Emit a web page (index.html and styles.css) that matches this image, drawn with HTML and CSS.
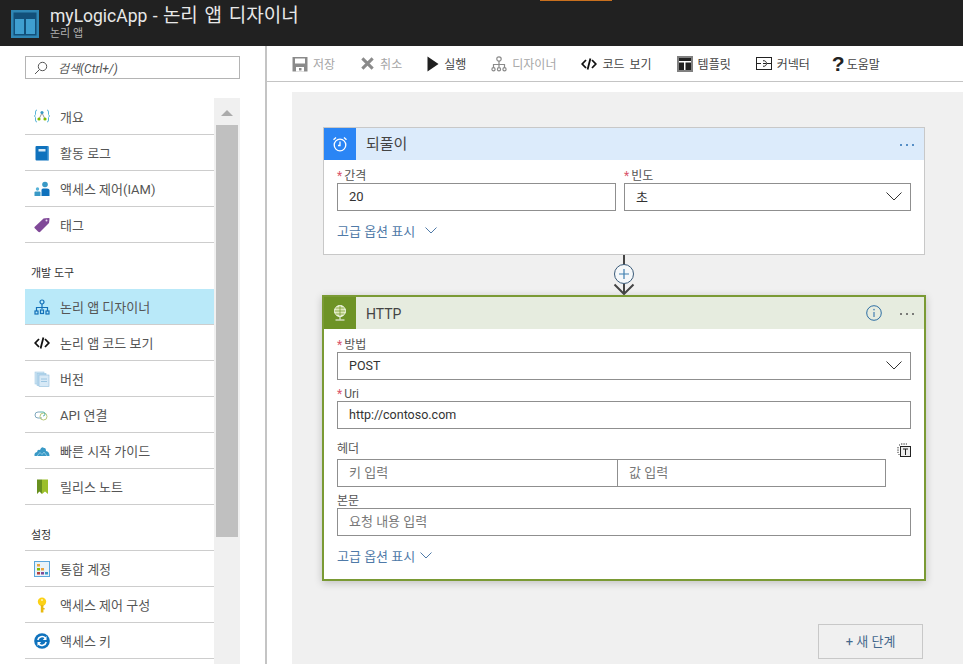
FILE: index.html
```html
<!DOCTYPE html>
<html lang="ko">
<head>
  <meta charset="UTF-8" />
  <meta name="viewport" content="width=device-width, initial-scale=1.0" />
  <title>myLogicApp - 논리 앱 디자이너</title>
  <link rel="stylesheet" href="styles.css">
</head>
<body>
  <header class="topbar">
    <span class="topbar-accent"></span>
    <svg class="logo" viewBox="0 0 28 28" width="28" height="28">
      <rect width="28" height="28" fill="#2f86b4"/>
      <rect x="2.5" y="2.5" width="23" height="23" fill="#12507a"/>
      <rect x="4" y="9" width="9" height="15" fill="#3f9fd0"/>
      <rect x="15" y="9" width="9" height="15" fill="#3f9fd0"/>
    </svg>
    <div>
      <div class="topbar-title">myLogicApp - <span>논리 앱 디자이너</span></div>
      <div class="topbar-sub">논리 앱</div>
    </div>
  </header>

  <div class="layout">
    <aside class="sidebar">
      <div class="search">
        <svg viewBox="0 0 14 14" width="14" height="14"><circle cx="8.5" cy="5.5" r="4.2" fill="none" stroke="#555"/><path d="M5.5 8.5 L1 13" stroke="#555" fill="none"/></svg>
        <span>검색(Ctrl+/)</span>
      </div>
      <div class="nav-wrap">
        <nav class="nav">
          <a class="nav-row">
            <svg viewBox="0 0 16 16" width="16" height="16"><path d="M3 2 Q1.5 2 1.5 4 V6.5 L0.5 8 L1.5 9.5 V12 Q1.5 14 3 14 M13 2 Q14.5 2 14.5 4 V6.5 L15.5 8 L14.5 9.5 V12 Q14.5 14 13 14" fill="none" stroke="#59b4d9"/><path d="M8 5 L5 11 M8 5 L11 11" stroke="#999" fill="none"/><circle cx="8" cy="4.5" r="1.6" fill="#3999c6"/><circle cx="5" cy="11" r="1.6" fill="#7fba00"/><circle cx="11" cy="11" r="1.6" fill="#7fba00"/></svg>
            <span>개요</span>
          </a>
          <a class="nav-row">
            <svg viewBox="0 0 16 16" width="16" height="16"><rect x="1.5" y="1" width="13" height="14.5" rx="1" fill="#0f72bd"/><rect x="4.5" y="4" width="7" height="2.5" fill="#d5e8f6"/><rect x="13.5" y="1.5" width="1.5" height="14" fill="#59a5dc"/></svg>
            <span>활동 로그</span>
          </a>
          <a class="nav-row">
            <svg viewBox="0 0 16 16" width="16" height="16"><circle cx="11" cy="3.5" r="2.8" fill="#3999c6"/><path d="M7.5 15 V9 Q7.5 7.5 9 7.5 H13 Q15.5 7.5 15.5 9 V15 Z" fill="#0f72bd"/><circle cx="3.5" cy="8" r="1.7" fill="#59b4d9"/><path d="M0.5 15 V11.5 Q0.5 10.5 1.5 10.5 H5.5 Q6.5 10.5 6.5 11.5 V15 Z" fill="#3999c6"/></svg>
            <span>액세스 제어(IAM)</span>
          </a>
          <a class="nav-row">
            <svg viewBox="0 0 16 16" width="16" height="16"><path d="M0.5 10 L9.5 1.5 Q10.5 1 15 1 Q15.5 1 15.5 2 L15 6 L6 15 Q5 15.5 4 14.5 L1 11.5 Q0 10.5 0.5 10 Z" fill="#804998"/><circle cx="12.5" cy="3.5" r="1" fill="#e8d8f0"/></svg>
            <span>태그</span>
          </a>

          <div class="nav-section">개발 도구</div>

          <a class="nav-row active">
            <svg viewBox="0 0 16 16" width="16" height="16" fill="none" stroke="#1270b8" stroke-width="1.2"><circle cx="8" cy="3" r="2"/><path d="M8 5 V10 M2.5 12 V8.5 H13.5 V12"/><rect x="1" y="12" width="3" height="3"/><rect x="6.5" y="11" width="3" height="3.5"/><rect x="12" y="12" width="3" height="3"/></svg>
            <span>논리 앱 디자이너</span>
          </a>
          <a class="nav-row">
            <svg viewBox="0 0 16 16" width="16" height="16" fill="none" stroke="#111" stroke-width="1.8"><path d="M5 4 L1.2 8 L5 12 M11 4 L14.8 8 L11 12 M9.4 2.5 L6.6 13.5"/></svg>
            <span>논리 앱 코드 보기</span>
          </a>
          <a class="nav-row">
            <svg viewBox="0 0 16 16" width="16" height="16"><rect x="1" y="1" width="9" height="12" fill="#cfe4f3" stroke="#a5cce6" stroke-width="0.6"/><rect x="3" y="2.5" width="9" height="12" fill="#b9d9ee" stroke="#9cc6e2" stroke-width="0.6"/><rect x="5" y="4" width="10" height="11.5" fill="#d7e9f6" stroke="#8fbcdc" stroke-width="0.6"/><path d="M7 8 H13 M7 10.5 H13" stroke="#9cc6e2"/></svg>
            <span>버전</span>
          </a>
          <a class="nav-row">
            <svg viewBox="0 0 16 16" width="16" height="16" fill="none"><path d="M6 5 H4 A3 3 0 0 0 4 11 H8" stroke="#7fa8bd"/><circle cx="9.5" cy="9.5" r="3.5" stroke="#b8c87a"/><path d="M6 5 H9 A2 2 0 0 1 9 9" stroke="#59b4a9"/></svg>
            <span>API 연결</span>
          </a>
          <a class="nav-row">
            <svg viewBox="0 0 16 16" width="16" height="16"><path d="M0.5 13 Q0 9.5 3 9 Q3.5 6 6 7 Q7.5 3 10 5 Q12 4.5 12 8 Q15.5 8.5 15.5 13 Z" fill="#3999c6"/><path d="M3 13 L6 9.5 L8 11.5 L10 9 L13 13" fill="none" stroke="#9fd3ea" stroke-width="0.8"/></svg>
            <span>빠른 시작 가이드</span>
          </a>
          <a class="nav-row">
            <svg viewBox="0 0 16 16" width="16" height="16"><path d="M3 0.5 H8 V15 L5.5 12.5 L3 15 Z" fill="#68901f"/><path d="M8 0.5 H14 V15 L11 12.5 L8 15 Z" fill="#9cbf2b"/></svg>
            <span>릴리스 노트</span>
          </a>

          <div class="nav-section ruled">설정</div>

          <a class="nav-row">
            <svg viewBox="0 0 16 16" width="16" height="16"><rect x="0.5" y="0.5" width="15" height="15" fill="#e8f2f9" stroke="#59a5dc"/><rect x="3" y="3" width="3" height="2.5" fill="#e8a33d"/><rect x="3" y="7" width="3" height="2.5" fill="#7fba00"/><rect x="7" y="7" width="3" height="2.5" fill="#e8a33d"/><rect x="3" y="11" width="3" height="2.5" fill="#b5403f"/><rect x="7" y="11" width="3" height="2.5" fill="#804998"/><rect x="11" y="11" width="3" height="2.5" fill="#3999c6"/></svg>
            <span>통합 계정</span>
          </a>
          <a class="nav-row">
            <svg viewBox="0 0 16 16" width="16" height="16"><circle cx="8" cy="4.8" r="4.2" fill="#fcd116"/><rect x="6.8" y="8" width="2.6" height="7.5" fill="#e8b90f"/><rect x="9" y="11" width="1.6" height="1.5" fill="#e8b90f"/><circle cx="8" cy="3" r="1" fill="#fff3b0"/></svg>
            <span>액세스 제어 구성</span>
          </a>
          <a class="nav-row">
            <svg viewBox="0 0 16 16" width="16" height="16"><circle cx="8" cy="8" r="7.8" fill="#0f72bd"/><path d="M3.8 7 A4.3 4.3 0 0 1 11.4 5.2 M12.2 9 A4.3 4.3 0 0 1 4.6 10.8" fill="none" stroke="#fff" stroke-width="1.5"/><path d="M12.5 3 V7 H8.8 Z M3.5 13 V9 H7.2 Z" fill="#fff"/></svg>
            <span>액세스 키</span>
          </a>
        </nav>
        <div class="scrollbar">
          <div class="scroll-up"><i></i></div>
          <div class="scroll-thumb"></div>
        </div>
      </div>
    </aside>

    <main class="main">
      <div class="toolbar">
        <span class="tool off">
          <svg viewBox="0 0 16 16" width="16" height="16"><path d="M0.5 1 H15.5 V15.5 H0.5 Z" fill="#8a8a8a"/><rect x="3" y="2.5" width="10" height="5" fill="#fff"/><rect x="4" y="11" width="8" height="4.5" fill="#fff"/><rect x="7" y="12" width="2.5" height="2.5" fill="#8a8a8a"/></svg>
          저장
        </span>
        <span class="tool off">
          <svg viewBox="0 0 16 16" width="15" height="15"><path d="M2.5 2.5 L13.5 13.5 M13.5 2.5 L2.5 13.5" stroke="#8a8a8a" stroke-width="3.2"/></svg>
          취소
        </span>
        <span class="tool">
          <svg viewBox="0 0 12 16" width="12" height="16"><path d="M0.5 0.5 L11.5 8 L0.5 15.5 Z" fill="#1f1f1f"/></svg>
          실행
        </span>
        <span class="tool off">
          <svg viewBox="0 0 16 16" width="16" height="16" fill="none" stroke="#8a8a8a" stroke-width="1.2"><circle cx="8" cy="3" r="2.2"/><path d="M8 5 V11 M2.5 12 V8.5 H13.5 V12"/><circle cx="2.5" cy="13.3" r="1.6"/><circle cx="8" cy="13.3" r="1.6"/><circle cx="13.5" cy="13.3" r="1.6"/></svg>
          디자이너
        </span>
        <span class="tool">
          <svg viewBox="0 0 16 16" width="16" height="16" fill="none" stroke="#111" stroke-width="1.8"><path d="M5 4 L1.2 8 L5 12 M11 4 L14.8 8 L11 12 M9.4 2.5 L6.6 13.5"/></svg>
          코드 보기
        </span>
        <span class="tool">
          <svg viewBox="0 0 16 16" width="16" height="16"><rect width="16" height="16" fill="#808080"/><rect x="2" y="2" width="12" height="12" fill="#fff"/><rect x="2" y="2" width="12" height="3" fill="#222"/><rect x="2" y="6.5" width="5" height="7.5" fill="#222"/><rect x="8.5" y="6.5" width="5.5" height="7.5" fill="#222"/></svg>
          템플릿
        </span>
        <span class="tool">
          <svg viewBox="0 0 16 13" width="16" height="13" fill="none" stroke="#222"><rect x="0.5" y="0.5" width="15" height="12"/><path d="M0.5 6.5 H5 M11 6.5 H15.5 M7 3.8 A2.8 2.8 0 1 1 7 9.2 M7 6.5 H10"/></svg>
          커넥터
        </span>
        <span class="tool help">
          <span class="help-mark">?</span>
          도움말
        </span>
      </div>

      <div class="canvas">
        <section class="card">
          <div class="card-head head-blue">
            <span class="card-icon icon-blue">
              <svg viewBox="0 0 16 16" width="16" height="16" fill="none" stroke="#fff" stroke-width="1.3"><circle cx="8" cy="9" r="5.8"/><path d="M8 5.5 V9.5 H6 M1.5 3.8 L4 1.5 M14.5 3.8 L12 1.5"/></svg>
            </span>
            <span class="card-title">되풀이</span>
            <svg class="card-more" viewBox="0 0 16 4" width="16" height="4" fill="#2a6fb5"><circle cx="2" cy="2" r="1"/><circle cx="8" cy="2" r="1"/><circle cx="14" cy="2" r="1"/></svg>
          </div>
          <div class="card-body">
            <div class="two-col">
              <div>
                <label class="field-label"><em>*</em>간격</label>
                <input class="text-input dark" type="text" value="20">
              </div>
              <div>
                <label class="field-label"><em>*</em>빈도</label>
                <div class="select"><span>초</span><svg viewBox="0 0 16 9" width="16" height="9"><path d="M0.5 0.5 L8 8 L15.5 0.5" fill="none" stroke="#333"/></svg></div>
              </div>
            </div>
            <a class="advanced wide">고급 옵션 표시
              <svg viewBox="0 0 12 7" width="12" height="7"><path d="M0.5 0.5 L6 6 L11.5 0.5" fill="none" stroke="#4f7aa8"/></svg>
            </a>
          </div>
        </section>

        <div class="connector">
          <svg viewBox="0 0 30 40" width="30" height="40">
            <path d="M15 0 V13" stroke="#444" stroke-width="2"/>
            <path d="M15 29 V39" stroke="#444" stroke-width="2"/>
            <path d="M5.5 29.5 L15 39 L24.5 29.5" fill="none" stroke="#444" stroke-width="2"/>
            <circle cx="15" cy="19" r="9.5" fill="#f5f8fa" stroke="#3a5a78"/>
            <path d="M10 19 H20 M15 14 V24" stroke="#3f7fb0" stroke-width="1.2"/>
          </svg>
        </div>

        <section class="card card-active">
          <div class="card-head head-green">
            <span class="card-icon icon-green">
              <svg viewBox="0 0 16 18" width="16" height="18" fill="none" stroke="#fff" stroke-width="1"><circle cx="8" cy="7" r="5.5" fill="#dfeab8"/><path d="M2.5 7 H13.5 M8 1.5 V12.5 M3.5 4 H12.5 M3.5 10 H12.5" stroke="#6e9326" stroke-width="0.7"/><path d="M8 12.5 V15.5 M3.5 16 H12.5"/></svg>
            </span>
            <span class="card-title latin">HTTP</span>
            <svg class="info" viewBox="0 0 16 16" width="16" height="16" fill="none"><circle cx="8" cy="8" r="7.3" stroke="#2d6ea3"/><path d="M8 7 V12" stroke="#5a8fb8" stroke-width="1.4"/><circle cx="8" cy="4.6" r="0.9" fill="#5a8fb8"/></svg>
            <svg class="card-more" viewBox="0 0 16 4" width="16" height="4" fill="#555"><circle cx="2" cy="2" r="1"/><circle cx="8" cy="2" r="1"/><circle cx="14" cy="2" r="1"/></svg>
          </div>
          <div class="card-body">
            <label class="field-label"><em>*</em>방법</label>
            <div class="select latin-value"><span>POST</span><svg viewBox="0 0 16 9" width="16" height="9"><path d="M0.5 0.5 L8 8 L15.5 0.5" fill="none" stroke="#333"/></svg></div>

            <label class="field-label spaced"><em>*</em>Uri</label>
            <input class="text-input latin-value" type="text" value="http://contoso.com">

            <div class="label-row">
              <label class="field-label">헤더</label>
              <svg viewBox="0 0 14 14" width="14" height="14" fill="none"><path d="M4 1 H10 M1 4 V10 M3 1.5 L1.5 3 M1.5 11 L3 12.5" stroke="#333" stroke-dasharray="1.4 1"/><rect x="3.5" y="3.5" width="10" height="10" fill="#eee" stroke="#222"/><path d="M6 6 H11 M8.5 6 V12" stroke="#222"/></svg>
            </div>
            <div class="pair">
              <input class="text-input" type="text" placeholder="키 입력">
              <input class="text-input" type="text" placeholder="값 입력">
            </div>

            <label class="field-label spaced">본문</label>
            <input class="text-input" type="text" placeholder="요청 내용 입력">

            <a class="advanced second">고급 옵션 표시
              <svg viewBox="0 0 12 7" width="12" height="7"><path d="M0.5 0.5 L6 6 L11.5 0.5" fill="none" stroke="#4f7aa8"/></svg>
            </a>
          </div>
        </section>

        <button class="new-step" type="button">+ 새 단계</button>
      </div>
    </main>
  </div>
</body>
</html>
```

FILE: styles.css
```css
* {
  box-sizing: border-box;
}
html, body {
  margin: 0;
  height: 664px;
  overflow: hidden;
}
body {
  font-family: Roboto, "Noto Sans CJK KR", sans-serif;
  font-size: 13px;
  color: #555;
  background-color: #fff;
}
.topbar {
  position: relative;
  height: 46px;
  padding: 10px 0 0 11px;
  display: flex;
  gap: 11px;
  background-color: #212121;
  color: #fff;
}
.topbar-accent {
  position: absolute;
  top: 0;
  left: 540px;
  width: 72px;
  height: 1px;
  background-color: #c9701e;
}
.logo {
  flex: none;
}
.topbar-title {
  margin-top: -6px;
  font-size: 17.5px;
  line-height: 24px;
  word-spacing: 1px;
  color: #e8e8e8;
}
.topbar-title span {
  font-size: 19px;
  word-spacing: 2px;
}
.topbar-sub {
  font-size: 11px;
  line-height: 12px;
  color: #b0b0b0;
}
.layout {
  display: flex;
  height: 618px;
}

/* left menu */
.sidebar {
  flex: none;
  width: 267px;
  padding: 10px 0 0 25px;
  border-right: 2px solid #c4c4c4;
}
.search {
  width: 215px;
  height: 23px;
  padding-left: 8px;
  display: flex;
  align-items: center;
  gap: 10px;
  border: 1px solid #b4b4b4;
  font-size: 12px;
  font-style: italic;
  color: #555;
}
.nav-wrap {
  display: flex;
  height: 566px;
  margin-top: 19px;
  overflow: hidden;
}
.nav {
  width: 189px;
}
.nav-row {
  height: 36px;
  padding-left: 9px;
  display: flex;
  align-items: center;
  gap: 10px;
  border-bottom: 1px solid #cdcdcd;
}
.nav-row:first-child {
  height: 37px;
}
.nav-row svg {
  flex: none;
}
.nav-row.active {
  background-color: #b9e9f9;
}
.nav-section {
  height: 46px;
  padding: 23px 0 0 6px;
  font-size: 11px;
  line-height: 16px;
  color: #333;
}
.nav-section.ruled {
  border-bottom: 1px solid #cdcdcd;
}
.scrollbar {
  width: 26px;
  padding: 1px 2px 0;
  background-color: #f0f0f0;
}
.scroll-up {
  height: 26px;
  padding-top: 11px;
}
.scroll-up i {
  display: block;
  width: 0;
  margin: 0 auto;
  border-left: 6px solid transparent;
  border-right: 6px solid transparent;
  border-bottom: 6px solid #ababab;
}
.scroll-thumb {
  height: 412px;
  background-color: #c0c0c0;
}

/* toolbar */
.main {
  flex: 1;
  min-width: 0;
}
.toolbar {
  height: 36px;
  padding-left: 25px;
  display: flex;
  align-items: center;
  gap: 25px;
  border-bottom: 1px solid #c4c4c4;
  font-size: 12px;
  word-spacing: 2px;
  color: #444;
}
.tool {
  display: flex;
  align-items: center;
  gap: 5px;
  white-space: nowrap;
}
.tool.off {
  color: #a6a6a6;
}
.tool.help {
  gap: 2px;
  margin-left: -3px;
}
.help-mark {
  font-family: "Liberation Sans", sans-serif;
  font-size: 21px;
  font-weight: bold;
  line-height: 20px;
  color: #222;
}

/* designer */
.canvas {
  height: 572px;
  margin: 10px 0 0 25px;
  padding: 35px 0 0 31px;
  background-color: #f0f0f0;
}
.card {
  width: 602px;
  border: 1px solid #c8c8c8;
  background-color: #fff;
}
.card-active {
  width: 604px;
  margin-left: -1px;
  border: 2px solid #7a9a34;
  box-shadow: 0 2px 8px rgba(0, 0, 0, 0.2);
}
.card-head {
  height: 32px;
  display: flex;
  align-items: center;
}
.head-blue {
  background-color: #dcebfb;
}
.head-green {
  background-color: #e6ecdf;
}
.card-icon {
  width: 32px;
  height: 32px;
  display: flex;
  align-items: center;
  justify-content: center;
}
.icon-blue {
  background-color: #2a85f5;
}
.icon-green {
  background-color: #6e9326;
}
.card-title {
  flex: 1;
  margin: -3px 0 0 10px;
  font-size: 15px;
  color: #444;
}
.card-title.latin {
  margin-top: 1px;
  font-size: 14px;
}
.card-more {
  margin: 2px 9px 0 0;
}
.info {
  margin-right: 17px;
}
.card-body {
  padding: 7px 13px 0;
}
.card > .card-body {
  min-height: 94px;
}
.card-active > .card-body {
  min-height: 250px;
}
.two-col {
  display: grid;
  grid-template-columns: 279px 287px;
  gap: 8px;
}
.field-label {
  display: block;
  height: 16px;
  font-size: 12px;
  line-height: 18px;
  color: #555;
}
.field-label em {
  margin-right: 2px;
  font-style: normal;
  color: #d9546a;
}
.field-label.spaced {
  margin-top: 5px;
}
.text-input {
  display: block;
  width: 100%;
  height: 28px;
  padding: 0 0 2px 11px;
  border: 1px solid #8f8f8f;
  border-radius: 0;
  outline: none;
  font-family: inherit;
  font-size: 13px;
  color: #333;
  background-color: #fff;
}
.text-input::placeholder {
  color: #777;
}
.select {
  height: 28px;
  padding: 0 8px 2px 11px;
  display: flex;
  align-items: center;
  justify-content: space-between;
  border: 1px solid #8f8f8f;
  font-size: 13px;
  color: #333;
}
.text-input.latin-value,
.select.latin-value {
  font-size: 12.5px;
}
.label-row {
  height: 19px;
  margin-top: 11px;
  display: flex;
  justify-content: space-between;
  align-items: flex-start;
}
.label-row svg {
  margin-top: 3px;
}
.pair {
  display: grid;
  grid-template-columns: 281px 269px;
  width: 549px;
}
.pair .text-input + .text-input {
  margin-left: -1px;
}
.advanced {
  display: flex;
  align-items: center;
  height: 18px;
  font-size: 13px;
  color: #4f7aa8;
}
.advanced.wide {
  gap: 10px;
  margin-top: 10px;
}
.advanced.second {
  gap: 5px;
  margin-top: 10px;
}
.connector {
  width: 602px;
  height: 40px;
  display: flex;
  justify-content: center;
}
.new-step {
  display: block;
  width: 105px;
  height: 35px;
  margin: 43px 0 0 495px;
  padding: 0 0 2px;
  border: 1px solid #c8c8c8;
  background: none;
  font-family: inherit;
  font-size: 13px;
  color: #44688c;
}
```
